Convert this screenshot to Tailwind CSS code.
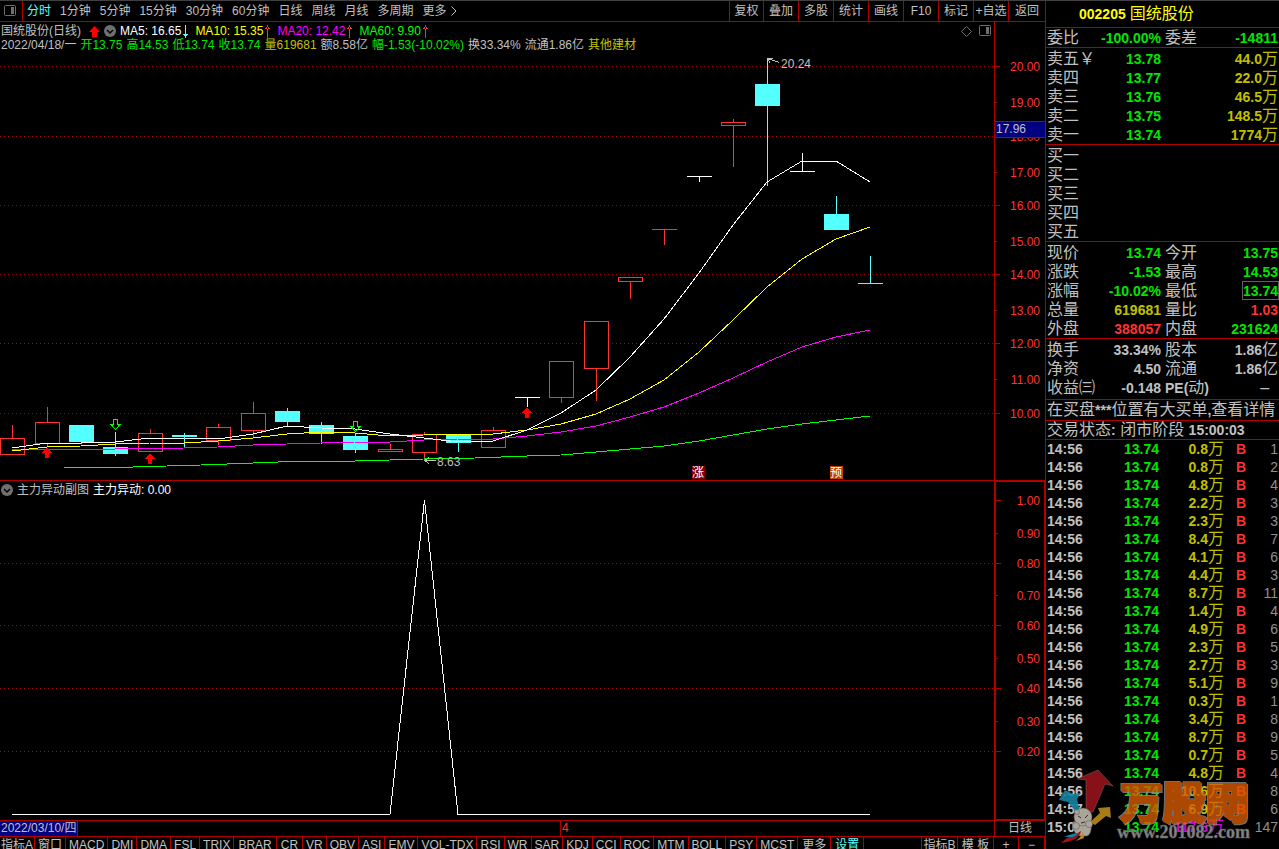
<!DOCTYPE html>
<html lang="zh-CN">
  <head>
    <meta charset="UTF-8" />
    <meta name="viewport" content="width=device-width, initial-scale=1.0" />
    <title>国统股份 002205 - 日线</title>
    <script src="https://cdn.jsdelivr.net/npm/@tailwindcss/browser@4"></script>
  </head>
  <body class="bg-black text-[#c0c0c0] font-['Liberation_Sans','Noto_Sans_CJK_SC',sans-serif] text-xs leading-[14px]">
    <div class="flex h-screen overflow-hidden border-t border-[#404040] whitespace-nowrap">
      <!-- chart side -->
      <main class="flex-1 min-w-0 flex flex-col">
        <nav class="flex h-[21px] shrink-0 items-stretch border-b border-[#b00000]">
          <button class="w-[22px] flex items-center pl-1" aria-label="侧栏">
            <svg class="w-3 h-3" viewBox="0 0 12 12" fill="none">
              <rect x="0.5" y="0.5" width="11" height="10" rx="1" stroke="#707070" />
              <rect x="7" y="2" width="3" height="7" fill="#707070" />
            </svg>
          </button>
          <div class="flex flex-1 items-center gap-[9px] border-l border-[#b00000] pl-1">
            <button class="text-[#54ffff]">分时</button>
            <button>1分钟</button>
            <button>5分钟</button>
            <button>15分钟</button>
            <button>30分钟</button>
            <button>60分钟</button>
            <button>日线</button>
            <button>周线</button>
            <button>月线</button>
            <button>多周期</button>
            <button class="flex items-center gap-1">
              更多
              <svg class="w-[6px] h-[10px]" viewBox="0 0 6 10" fill="none" stroke="#c0c0c0"><path d="M0.5 0.5L5 5L0.5 9.5" /></svg>
            </button>
          </div>
          <div class="flex">
            <button class="w-[34px] border-l border-[#b00000]">复权</button>
            <button class="w-[35px] border-l border-[#b00000]">叠加</button>
            <button class="w-[35px] border-l border-[#b00000]">多股</button>
            <button class="w-[35px] border-l border-[#b00000]">统计</button>
            <button class="w-[35px] border-l border-[#b00000]">画线</button>
            <button class="w-[35px] border-l border-[#b00000]">F10</button>
            <button class="w-[35px] border-l border-[#b00000]">标记</button>
            <button class="w-[35px] border-l border-[#b00000]">+自选</button>
            <button class="w-[37px] border-l border-[#b00000]">返回</button>
          </div>
        </nav>

        <!-- K line panel -->
        <section class="flex shrink-0 border-b border-[#b00000]">
          <div class="flex-1 min-w-0">
            <div class="h-[31px] pl-px pt-[2px]">
              <div class="flex h-[14px] items-center">
                <h1 class="w-[88px]">国统股份(日线)</h1>
                <svg class="w-[11px] h-[11px]" viewBox="0 0 11 11"><path d="M5.5 0L11 6H8V11H3V6H0Z" fill="#ff0000" /></svg>
                <button class="ml-1 mr-1" aria-label="展开">
                  <svg class="w-3 h-3" viewBox="0 0 12 12"><circle cx="6" cy="6" r="6" fill="#707070" /><path d="M3 5L6 8L9 5" fill="none" stroke="#000" stroke-width="1.5" /></svg>
                </button>
                <span class="text-white">MA5: 16.65</span>
                <svg class="ml-[2px] w-[5px] h-[13px]" viewBox="0 0 5 13" fill="#54ffff"><path d="M2 0H3V13H2ZM0 9H5V10H4V11H1V10H0Z" /></svg>
                <span class="ml-[7px] text-[#ffff00]">MA10: 15.35</span>
                <svg class="ml-[2px] w-[5px] h-[13px]" viewBox="0 0 5 13" fill="#ff3232"><path d="M2 0H3V13H2ZM0 4H5V3H4V2H1V3H0Z" /></svg>
                <span class="ml-[7px] text-[#ff00ff]">MA20: 12.42</span>
                <svg class="ml-[2px] w-[5px] h-[13px]" viewBox="0 0 5 13" fill="#ff3232"><path d="M2 0H3V13H2ZM0 4H5V3H4V2H1V3H0Z" /></svg>
                <span class="ml-[7px] text-[#00ff00]">MA60: 9.90</span>
                <svg class="ml-[2px] w-[5px] h-[13px]" viewBox="0 0 5 13" fill="#ff3232"><path d="M2 0H3V13H2ZM0 4H5V3H4V2H1V3H0Z" /></svg>
                <span class="flex-1"></span>
                <button class="mr-[7px]" aria-label="标注">
                  <svg class="w-[11px] h-[11px]" viewBox="0 0 11 11" fill="none" stroke="#707070"><path d="M5.5 0.5L10.5 5.5L5.5 10.5L0.5 5.5Z" /></svg>
                </button>
                <button class="mr-[3px]" aria-label="面板">
                  <svg class="w-3 h-3" viewBox="0 0 12 12" fill="none">
                    <rect x="0.5" y="0.5" width="11" height="10" rx="1" stroke="#707070" />
                    <rect x="7" y="2" width="3" height="7" fill="#707070" />
                  </svg>
                </button>
              </div>
              <div class="flex gap-1">
                <span>2022/04/18/一</span>
                <span class="text-[#00e600]">开13.75</span>
                <span class="text-[#00e600]">高14.53</span>
                <span class="text-[#00e600]">低13.74</span>
                <span class="text-[#00e600]">收13.74</span>
                <span class="text-[#c0c000]">量619681</span>
                <span>额8.58亿</span>
                <span class="text-[#00e600]">幅-1.53(-10.02%)</span>
                <span>换33.34%</span>
                <span>流通1.86亿</span>
                <span class="text-[#c0c000]">其他建材</span>
              </div>
            </div>
            <svg id="kline" class="block w-full h-[427px]" viewBox="0 53 994 427" preserveAspectRatio="xMinYMin meet" shape-rendering="crispEdges">
              <g id="kline-grid" stroke="#b00000" stroke-dasharray="1 3"></g>
              <g id="candles"></g>
              <g fill="none">
                <polyline stroke="#00ff00" points="64,467 133,467 167,466 201,465 253,463 304,461 355,461 390,460 424,459 475,458 527,456 561,455 596,452 630,449 664,446 699,441 733,435 767,429 802,424 836,420 870,416" />
                <polyline stroke="#ff00ff" points="12,450 47,449 115,449 184,448 218,447 253,445 287,444 321,443 355,442 390,442 424,440 458,439 493,439 527,436 561,432 596,426 630,417 664,407 699,393 733,378 767,362 802,347 836,337 870,330" />
                <polyline stroke="#ffff00" points="12,451 47,447 81,446 115,444 150,443 184,443 218,441 253,438 287,434 321,432 355,433 390,436 424,435 458,434 493,434 527,430 561,424 596,414 630,399 664,380 699,352 733,320 767,287 802,259 836,239 870,227" />
                <polyline stroke="#ffffff" points="12,448 47,443 81,443 115,442 150,438 184,438 218,439 253,434 287,426 321,428 355,429 390,434 424,438 458,442 493,441 527,430 561,413 596,390 630,357 664,319 699,273 733,225 767,182 802,161 836,161 870,182" />
              </g>
              <!-- buy / sell marks -->
              <g fill="#ff0000">
                <path d="M47 447L52 453H49V458H45V453H42Z" />
                <path d="M150 453L155 459H152V464H148V459H145Z" />
                <path d="M527 407L532 413H529V418H525V413H522Z" />
              </g>
              <g fill="none" stroke="#00ff00">
                <path d="M113.5 419.5H117.5V424.5H120L115.5 429.5L111 424.5H113.5Z" />
                <path d="M353.5 421.5H357.5V426.5H360L355.5 431.5L351 426.5H353.5Z" />
              </g>
              <g fill="none" stroke="#c0c0c0">
                <path d="M768 58.5L779 62.5M768 58.5H773M768 58.5L770 63" />
                <path d="M425 460.5H436M429 457.5L425 460.5L429 463.5" />
              </g>
              <g fill="#c0c0c0" font-size="12">
                <text x="781" y="68">20.24</text>
                <text x="437" y="466">8.63</text>
              </g>
              <rect x="692" y="466" width="13" height="13" fill="#800000" />
              <rect x="830" y="466" width="13" height="13" fill="#c04000" />
              <g fill="#fff" font-size="12">
                <text x="692" y="477">涨</text>
                <text x="830" y="477">预</text>
              </g>
            </svg>
          </div>
          <svg class="block w-[51px] h-[458px] shrink-0" viewBox="994 22 51 458" shape-rendering="crispEdges">
            <line x1="994.5" y1="22" x2="994.5" y2="480" stroke="#b00000" />
            <g id="price-axis" fill="#ff3232" font-size="12" text-anchor="end"></g>
            <rect x="994.5" y="121.5" width="51" height="16" fill="#000080" stroke="#b00000" />
            <text x="996" y="133" font-size="12" fill="#c0c0c0">17.96</text>
          </svg>
        </section>

        <!-- indicator panel -->
        <section class="flex shrink-0 border-b border-[#b00000]">
          <div class="flex-1 min-w-0">
            <div class="flex h-[18px] items-center gap-1 pl-px">
              <button aria-label="展开副图">
                <svg class="w-3 h-3" viewBox="0 0 12 12"><circle cx="6" cy="6" r="6" fill="#707070" /><path d="M3 5L6 8L9 5" fill="none" stroke="#000" stroke-width="1.5" /></svg>
              </button>
              <span>主力异动副图</span>
              <span class="text-white">主力异动: 0.00</span>
            </div>
            <svg class="block w-full h-[321px]" viewBox="0 499 994 321" preserveAspectRatio="xMinYMin meet" shape-rendering="crispEdges">
              <g id="sub-grid" stroke="#b00000" stroke-dasharray="1 3"></g>
              <polyline fill="none" stroke="#fff" points="12,814.5 390,814.5 424.5,500 458,814.5 870,814.5" />
            </svg>
          </div>
          <svg class="block w-[51px] h-[339px] shrink-0" viewBox="994 481 51 339" shape-rendering="crispEdges">
            <path d="M995 481V820M994 481.5H1045M994 819.5H1045M1044.5 481V820" stroke="#b00000" fill="none" />
            <path d="M995 481V820" stroke="#b00000" stroke-width="2" />
            <g id="sub-axis" fill="#ff3232" font-size="12" text-anchor="end"></g>
          </svg>
        </section>

        <div class="flex h-4 shrink-0 border-b border-[#b00000]">
          <div class="w-[78px] bg-[#000080] border-r border-[#b00000] pl-px">2022/03/10/四</div>
          <div class="w-[482px]"></div>
          <div class="flex-1 border-l border-[#b00000] pl-px text-[#ff3232]">4</div>
          <div class="w-[51px] border-l border-[#b00000] text-center">日线</div>
        </div>

        <div class="flex shrink-0 *:h-4 *:border-r *:border-[#b00000]">
          <button class="px-px">指标A</button>
          <button class="px-[3px]">窗口</button>
          <button class="px-[3px]">MACD</button>
          <button class="px-[3px]">DMI</button>
          <button class="px-[3px]">DMA</button>
          <button class="px-[3px]">FSL</button>
          <button class="px-[3px]">TRIX</button>
          <button class="px-1">BRAR</button>
          <button class="px-1">CR</button>
          <button class="px-[3px]">VR</button>
          <button class="px-[3px]">OBV</button>
          <button class="px-[3px]">ASI</button>
          <button class="px-[3px]">EMV</button>
          <button class="px-[3px]">VOL-TDX</button>
          <button class="px-[3px]">RSI</button>
          <button class="px-[3px]">WR</button>
          <button class="px-[3px]">SAR</button>
          <button class="px-[3px]">KDJ</button>
          <button class="px-[3px]">CCI</button>
          <button class="px-[3px]">ROC</button>
          <button class="px-[3px]">MTM</button>
          <button class="px-[3px]">BOLL</button>
          <button class="px-[3px]">PSY</button>
          <button class="px-[3px]">MCST</button>
          <button class="px-1">更多</button>
          <button class="px-1 text-[#54ffff]">设置</button>
          <span class="flex-1"></span>
          <button class="w-9">指标B</button>
          <button class="w-9">模 板</button>
          <button class="w-[25px]">+</button>
          <button class="w-[26px]">−</button>
        </div>
      </main>

      <!-- quote side -->
      <aside class="relative w-[234px] shrink-0 overflow-hidden border-l border-[#b00000] text-base leading-4">
        <h2 class="flex h-[27px] items-center gap-1 border-b border-[#b00000] pl-[33px] text-[#ffff00]">
          <b class="text-sm leading-4">002205</b>国统股份
        </h2>
        <div id="quotes"></div>
        <p class="h-[21px] border-b border-[#b00000] pl-px pt-[2px]">在买盘<b class="text-sm leading-4">***</b>位置有大买单<b class="text-sm leading-4">,</b>查看详情</p>
        <p class="h-[19px] border-b border-[#b00000] pl-px pt-px">交易状态<b class="text-sm leading-4">:</b> 闭市阶段 <b class="text-sm leading-4">15:00:03</b></p>
        <table class="w-full table-fixed">
          <colgroup>
            <col class="w-[54px]" />
            <col class="w-[59px]" />
            <col class="w-[65px]" />
            <col class="w-[22px]" />
            <col />
          </colgroup>
          <tbody id="ticks"></tbody>
        </table>

        <!-- site mark over the last ticks -->
        <svg class="absolute bottom-0 right-0 w-[234px] h-[84px]" viewBox="1045 765 234 84">
          <path d="M1098 770L1113 786L1105 784L1093 812H1086V780L1077 779Z" fill="#a0141e" opacity=".85" stroke="#808080" stroke-width=".5" />
          <path d="M1059 800L1065 790L1073 794L1081 793L1077 799L1080 810L1075 811L1068 802Z" fill="#1683a0" opacity=".9" />
          <path d="M1090 822L1100 813L1098 808L1110 807L1111 818L1106 816L1095 825Z" fill="#b88a18" opacity=".9" />
          <g fill="#aaa59a" stroke="#66605a" stroke-width=".6">
            <path d="M1073 822C1072 832 1077 837 1085 836C1091 837 1092 828 1091 820C1089 815 1085 818 1082 820Z" />
            <circle cx="1083" cy="817" r="9" />
            <circle cx="1077" cy="812" r="2.5" />
            <circle cx="1089" cy="824" r="3.5" />
            <circle cx="1076" cy="826" r="3.5" />
          </g>
          <path d="M1078 816L1081 818M1085 818L1088 815M1081 823L1085 822" stroke="#302c28" />
          <path d="M1061 843C1068 836 1074 835 1081 831C1080 837 1074 841 1061 843Z" fill="#a0141e" />
          <path d="M1064 837C1069 835 1074 833 1079 833L1073 837Z" fill="#1683a0" />
          <path d="M1073 842C1079 840 1081 836 1083 832L1084 838Z" fill="#b88a18" />
          <g opacity=".8" class="drop-shadow-[1px_1px_0_#8c8c8c]">
            <text x="1120" y="819" font-size="43" font-weight="900" fill="#d85a00" stroke="#d85a00" stroke-width="2" class="drop-shadow-[-1px_-1px_0_#8c8c8c]">万股网</text>
          </g>
          <text x="1117" y="838" font-size="18" font-weight="700" font-family="Liberation Serif, serif" fill="#858585" stroke="#606060" stroke-width=".5">www.201082.com</text>
        </svg>
      </aside>
    </div>

    <script>
      // type, centre x, body top, body bottom, high, low
      const candles = [
        ["up", 12, 438, 454, 425, 454],
        ["up", 47, 422, 443, 407, 445],
        ["down", 81, 425, 441, 425, 443],
        ["down", 115, 447, 453, 432, 455],
        ["up", 150, 433, 451, 429, 451],
        ["down", 184, 435, 436, 433, 446],
        ["up", 218, 427, 440, 424, 444],
        ["up", 253, 413, 430, 402, 436],
        ["down", 287, 411, 421, 408, 425],
        ["down", 321, 425, 433, 422, 443],
        ["down", 355, 436, 449, 433, 452],
        ["up", 390, 449, 451, 444, 451],
        ["up", 424, 434, 452, 432, 460],
        ["down", 458, 434, 442, 434, 451],
        ["up", 493, 430, 447, 427, 447],
        ["flat", 527, 397, 397, 397, 406],
        ["up", 561, 361, 397, 361, 402],
        ["up", 596, 321, 368, 321, 400],
        ["up", 630, 277, 281, 277, 298],
        ["up", 664, 229, 229, 229, 244],
        ["flat", 699, 176, 176, 176, 181],
        ["up", 733, 122, 125, 119, 166],
        ["down", 767, 84, 105, 58, 185],
        ["flat", 802, 171, 171, 153, 171],
        ["down", 836, 214, 229, 196, 229],
        ["down", 870, 283, 283, 256, 283],
      ];
      const colors = { up: "#ff3232", down: "#54ffff", flat: "#ffffff" };

      document.getElementById("candles").innerHTML = candles
        .map(([t, x, top, bottom, high, low]) => {
          const c = colors[t];
          let s = `<rect x="${x}" y="${high}" width="1" height="${low - high + 1}" fill="${c}"/>`;
          if (t === "up" && bottom > top) {
            s += `<rect x="${x - 11.5}" y="${top + 0.5}" width="24" height="${bottom - top}" fill="#000" stroke="${c}"/>`;
          } else {
            s += `<rect x="${x - 12}" y="${top}" width="25" height="${bottom - top + 1}" fill="${c}"/>`;
          }
          return s;
        })
        .join("");

      const gridLine = (y) => `<line x1="0" x2="994" y1="${y + 0.5}" y2="${y + 0.5}"/>`;
      document.getElementById("kline-grid").innerHTML = [66, 136, 205, 274, 343, 413].map(gridLine).join("");
      document.getElementById("sub-grid").innerHTML = [563, 625, 688, 751].map(gridLine).join("");

      const axis = (id, rows, x0) => {
        document.getElementById(id).innerHTML = rows
          .map(([label, y], i) => {
            const w = i % 2 ? 2 : 5;
            return `<rect x="${x0}" y="${y}" width="${w}" height="1" fill="#b00000"/><text x="1040" y="${y + 5}">${label}</text>`;
          })
          .join("");
      };
      axis("price-axis", [
        ["20.00", 66], ["19.00", 102], ["18.00", 136], ["17.00", 172], ["16.00", 205], ["15.00", 241],
        ["14.00", 274], ["13.00", 310], ["12.00", 343], ["11.00", 379], ["10.00", 413],
      ], 995);
      axis("sub-axis", [
        ["1.00", 500], ["0.90", 533], ["0.80", 563], ["0.70", 595], ["0.60", 625],
        ["0.50", 658], ["0.40", 688], ["0.30", 721], ["0.20", 751],
      ], 996);

      const G = "text-[#00e600]";
      const Y = "text-[#c0c000]";
      const R = "text-[#ff3232]";
      const W = "text-[#c0c0c0]";

      // latin runs are bold 14px, chinese stays regular 16px
      const mixed = (s) => s.replace(/[ -~]+/g, (m) => `<b class="text-sm leading-4">${m}</b>`);

      const blocks = [
        { cls: "h-5", rows: [["委比", "-100.00%", G, "委差", "-14811", G]] },
        {
          cls: "h-[97px] pt-px",
          rows: [
            ["卖五￥", "13.78", G, "", "44.0万", Y],
            ["卖四", "13.77", G, "", "22.0万", Y],
            ["卖三", "13.76", G, "", "46.5万", Y],
            ["卖二", "13.75", G, "", "148.5万", Y],
            ["卖一", "13.74", G, "", "1774万", Y],
          ],
        },
        { cls: "h-[97px] pt-px", rows: ["一", "二", "三", "四", "五"].map((n) => ["买" + n, "", W, "", "", W]) },
        {
          cls: "h-[97px] pt-px",
          rows: [
            ["现价", "13.74", G, "今开", "13.75", G],
            ["涨跌", "-1.53", G, "最高", "14.53", G],
            ["涨幅", "-10.02%", G, "最低", "13.74", G + " outline outline-[#606060]"],
            ["总量", "619681", Y, "量比", "1.03", R],
            ["外盘", "388057", R, "内盘", "231624", G],
          ],
        },
        {
          cls: "h-[61px] pt-px",
          rows: [
            ["换手", "33.34%", W, "股本", "1.86亿", W],
            ["净资", "4.50", W, "流通", "1.86亿", W],
            ["收益㈢", "-0.148", W, "PE(动)", "–\u00a0\u00a0", W],
          ],
        },
      ];
      document.getElementById("quotes").innerHTML = blocks
        .map(
          (b) => `<div class="${b.cls} border-b border-[#b00000] px-px">
            <table class="w-full table-fixed">
              <colgroup><col class="w-[48px]"/><col class="w-[66px]"/><col class="w-[40px]"/><col/></colgroup>
              ${b.rows
                .map(
                  ([l1, v1, c1, l2, v2, c2]) => `<tr class="h-[19px]">
                    <th class="text-left font-normal">${l1}</th>
                    <td class="text-right ${c1}">${mixed(v1)}</td>
                    <th class="pl-1 text-left font-normal">${mixed(l2)}</th>
                    <td class="text-right"><span class="${c2}">${mixed(v2)}</span></td>
                  </tr>`
                )
                .join("")}
            </table>
          </div>`
        )
        .join("");

      const ticks = [
        ["0.8", 1], ["0.8", 2], ["4.8", 4], ["2.2", 3], ["2.3", 3], ["8.4", 7], ["4.1", 6], ["4.4", 3],
        ["8.7", 11], ["1.4", 4], ["4.9", 6], ["2.3", 5], ["2.7", 3], ["5.1", 9], ["0.3", 1], ["3.4", 8],
        ["8.7", 9], ["0.7", 5], ["4.8", 4], ["10.6", 8], ["6.9", 6], ["117.6", 147],
      ];
      document.getElementById("ticks").innerHTML = ticks
        .map(([vol, n], i) => {
          const last = i === ticks.length - 1;
          const time = last ? "15:00" : i === ticks.length - 2 ? "14:57" : "14:56";
          return `<tr class="h-[18px]">
            <td class="pl-px">${mixed(time)}</td>
            <td class="text-right ${G}">${mixed("13.74")}</td>
            <td class="text-right ${last ? "text-[#e000e0]" : Y}">${mixed(vol + "万")}</td>
            <td class="text-right ${R}">${last ? "" : mixed("B")}</td>
            <td class="pr-px text-right text-sm leading-4 text-[#909090]">${n}</td>
          </tr>`;
        })
        .join("");
    </script>
  </body>
</html>
